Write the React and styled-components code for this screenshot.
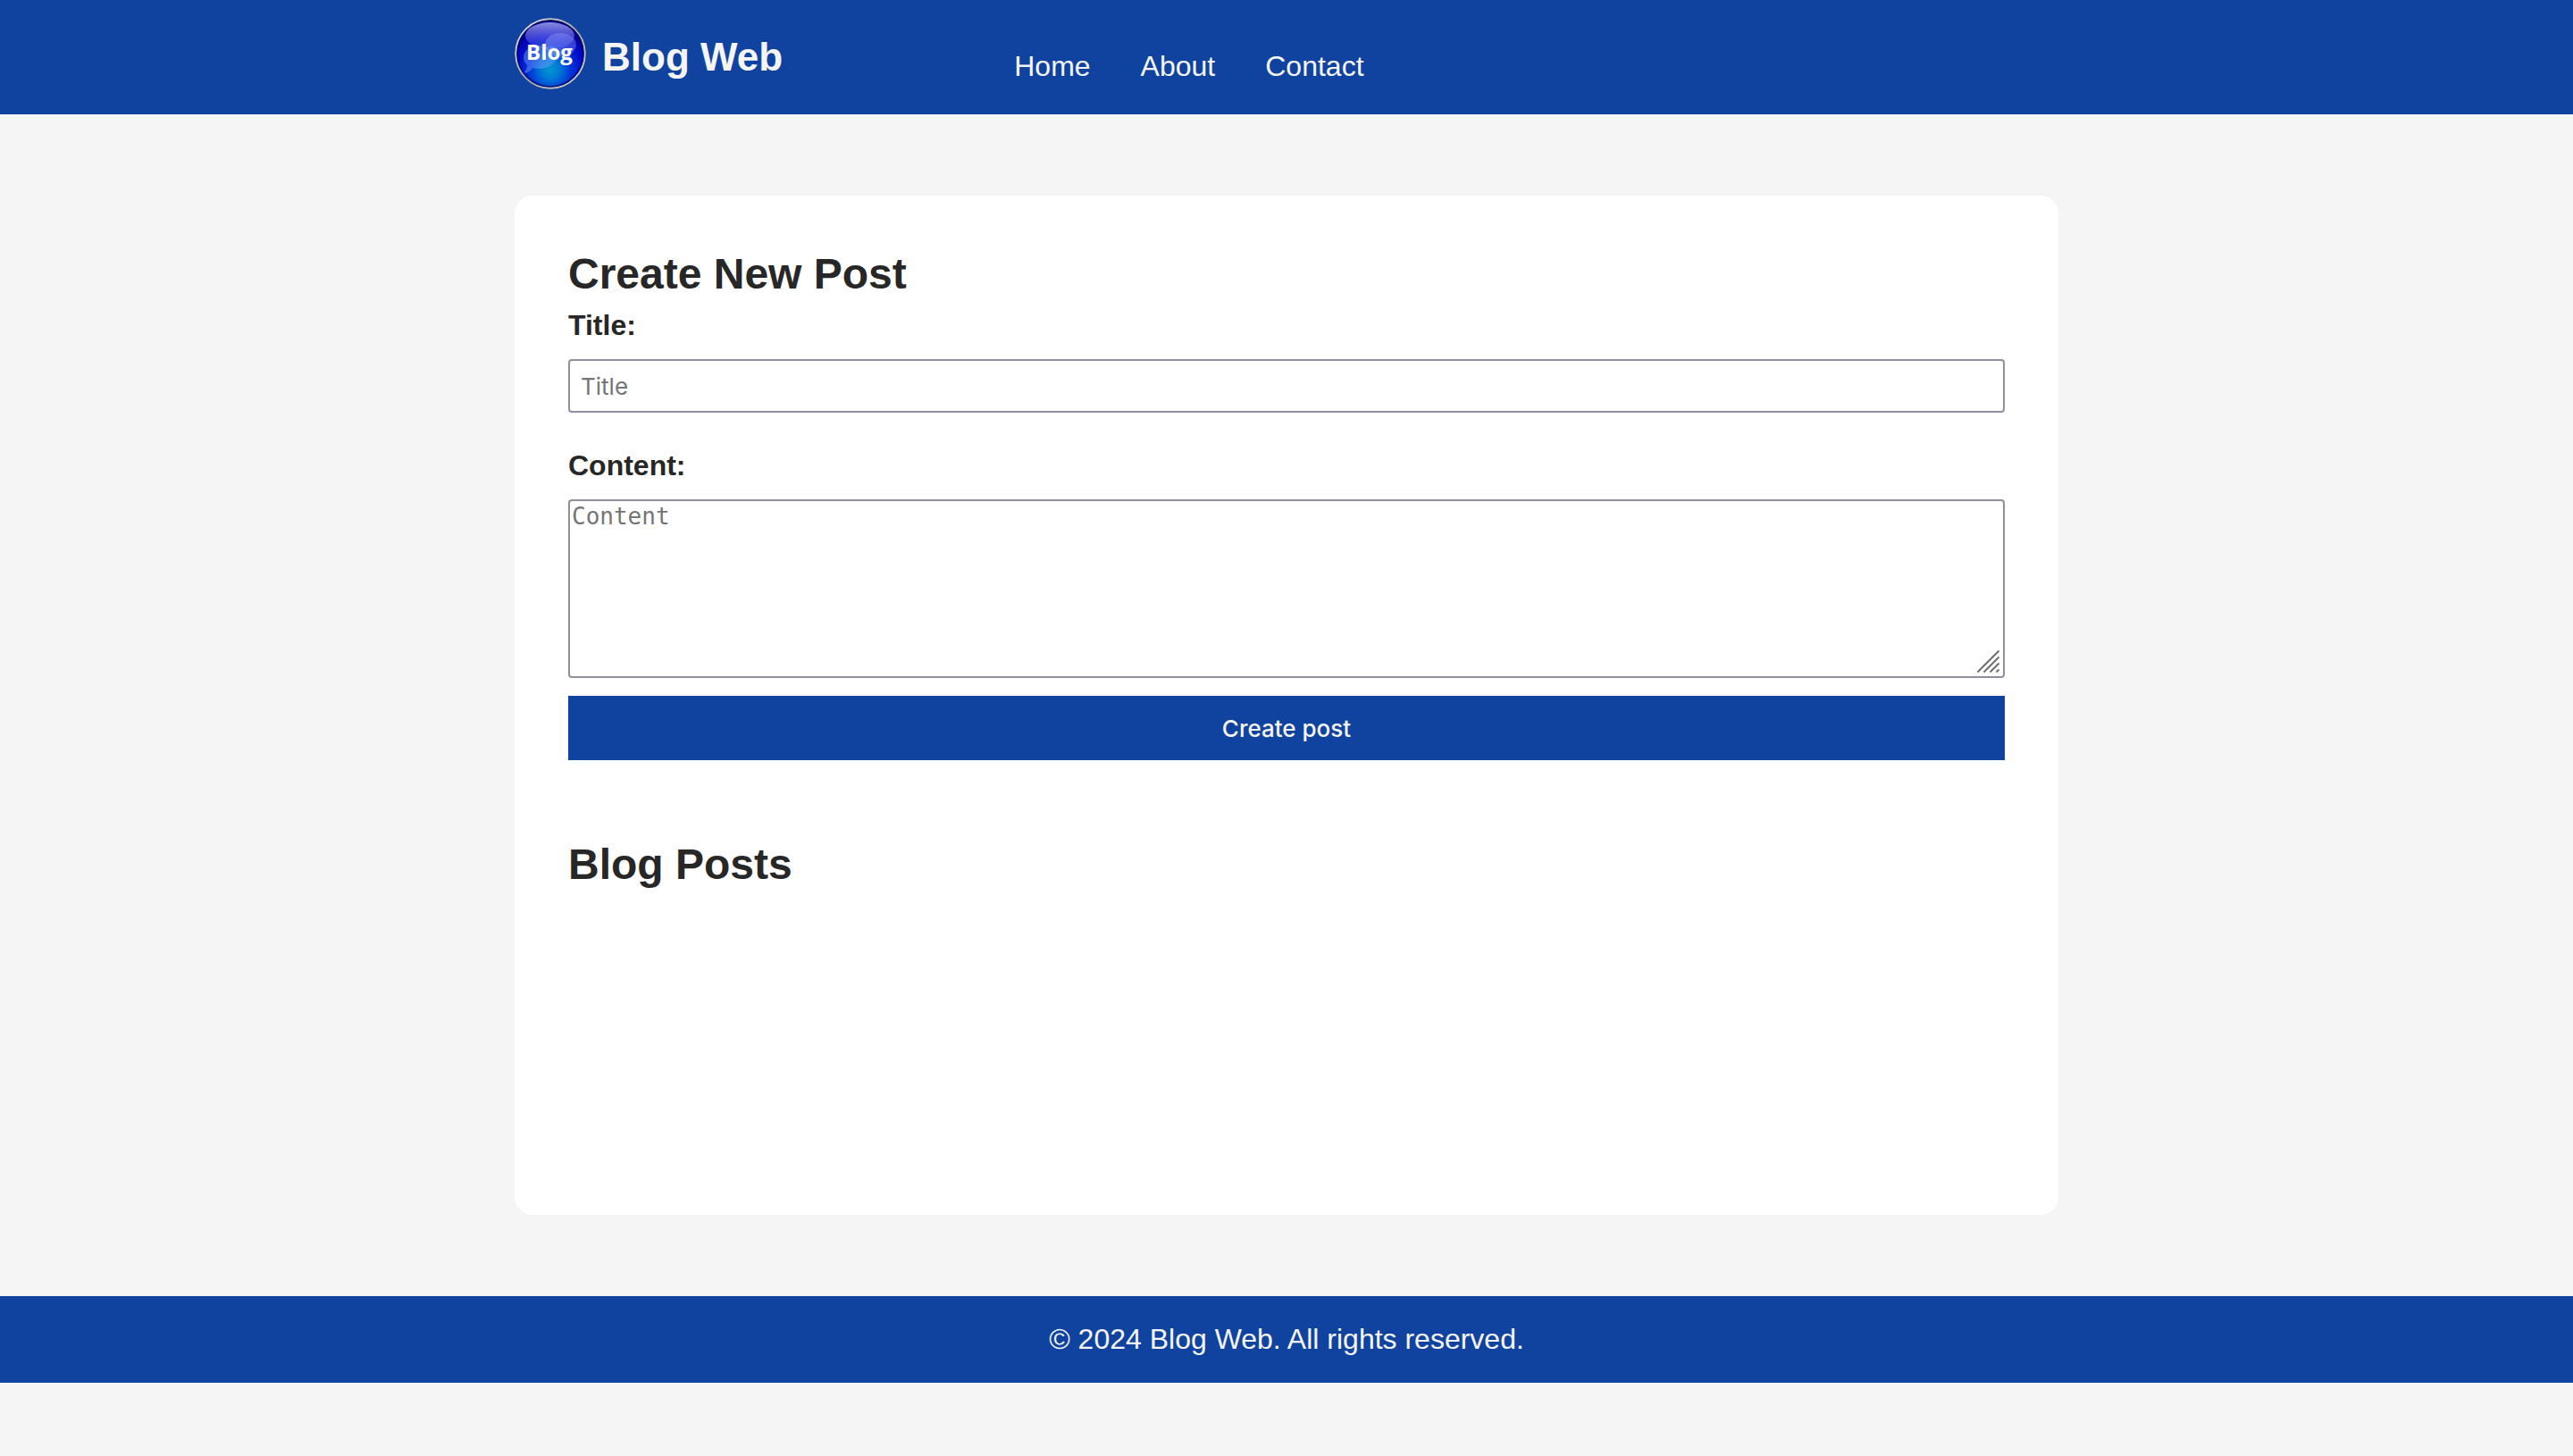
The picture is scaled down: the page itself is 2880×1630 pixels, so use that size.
import React from "react";
import styled, { createGlobalStyle } from "styled-components";

const BLUE = "#10439f";
const LIGHT = "#f5f5f5";
const INK = "#272727";

const GlobalStyle = createGlobalStyle`
  * {
    box-sizing: border-box;
    margin: 0;
    padding: 0;
  }

  body {
    background: ${LIGHT};
    color: ${INK};
    font-family: "Liberation Sans", Arial, sans-serif;
    font-size: 32px;
    line-height: 37px;
  }
`;

const Container = styled.div`
  width: 60%;
  margin: 0 auto;
`;

const Header = styled.header`
  background: ${BLUE};
  color: ${LIGHT};
  padding: 20px 0;
`;

const HeaderRow = styled(Container)`
  display: flex;
  align-items: center;
`;

const Brand = styled.div`
  display: flex;
  align-items: flex-start;
  gap: 18px;
`;

const BrandName = styled.h1`
  font-size: 44px;
  line-height: 88px;
  font-weight: bold;
  white-space: nowrap;
`;

const Nav = styled.nav`
  margin: 20px 0 0 15%;
`;

const NavList = styled.ul`
  display: flex;
  gap: 56px;
  list-style: none;
`;

const NavLink = styled.a`
  color: ${LIGHT};
  text-decoration: none;
`;

const Card = styled.main`
  width: 60%;
  min-height: 70vh;
  margin: 91px auto;
  padding: 60px;
  display: flex;
  flex-direction: column;
  gap: 89px;
  background: #fff;
  border-radius: 20px;
`;

const Heading = styled.h2`
  font-size: 48px;
  line-height: 55px;
  font-weight: bold;
`;

const Form = styled.form`
  display: flex;
  flex-direction: column;
  margin-top: 12px;
`;

const Field = styled.div`
  display: flex;
  flex-direction: column;
  gap: 20px;
  margin-bottom: ${(p) => p.$space}px;
`;

const Label = styled.label`
  line-height: 36px;
  font-weight: bold;
`;

const TextInput = styled.input`
  width: 100%;
  height: 60px;
  padding: 0 12px;
  border: 2px solid #8f8f9d;
  border-radius: 4px;
  background: #fff;
  color: ${INK};
  font: 26px Inter, sans-serif;

  &::placeholder {
    color: #757575;
    opacity: 1;
  }
`;

const AreaWrap = styled.div`
  position: relative;
  display: flex;
`;

const TextArea = styled.textarea`
  width: 100%;
  height: 200px;
  padding: 2px;
  border: 2px solid #8f8f9d;
  border-radius: 4px;
  background: #fff;
  color: ${INK};
  font: 26px "DejaVu Sans Mono", monospace;
  resize: none;

  &::placeholder {
    color: #757575;
    opacity: 1;
  }
`;

const Grip = styled.svg`
  position: absolute;
  right: 6px;
  bottom: 6px;
  pointer-events: none;
`;

const SubmitButton = styled.button`
  height: 72px;
  border: 0;
  background: ${BLUE};
  color: ${LIGHT};
  font: 500 26px Inter, sans-serif;
  cursor: pointer;
`;

const Footer = styled.footer`
  padding: 30px 0;
  background: ${BLUE};
  color: ${LIGHT};
  text-align: center;
`;

function Logo() {
  return (
    <svg width="80" height="80" viewBox="0 0 80 80" role="img" aria-label="Blog">
      <defs>
        <radialGradient id="ball" cx="40" cy="58" r="48" gradientUnits="userSpaceOnUse">
          <stop offset="0" stopColor="#0098cc" />
          <stop offset="0.22" stopColor="#0078d6" />
          <stop offset="0.5" stopColor="#0032d8" />
          <stop offset="0.78" stopColor="#0008c8" />
          <stop offset="1" stopColor="#00008c" />
        </radialGradient>
        <linearGradient id="shine" x1="0" y1="0" x2="0" y2="1">
          <stop offset="0" stopColor="#9a9af0" stopOpacity="0.9" />
          <stop offset="1" stopColor="#5a5aee" stopOpacity="0.25" />
        </linearGradient>
        <linearGradient id="ring" x1="0" y1="0" x2="1" y2="1">
          <stop offset="0" stopColor="#e4e4e4" />
          <stop offset="0.5" stopColor="#a8a8a8" />
          <stop offset="1" stopColor="#d8d4cc" />
        </linearGradient>
      </defs>
      <circle cx="40" cy="40" r="38.7" fill="url(#ball)" stroke="url(#ring)" strokeWidth="2" />
      <circle cx="40" cy="40" r="37" fill="none" stroke="#000050" strokeOpacity="0.7" strokeWidth="1.6" />
      <ellipse cx="39.5" cy="20" rx="27.5" ry="15" fill="url(#shine)" />
      <path
        d="M51 17C61 17 69 22.500 69 30C69 34.500 66 38 62 41C62 45 63 48 66 49C61 49.500 56 47 54 43.500C43 44 34 38 34 30.500C34 23 41 17 51 17Z"
        fill="#a9b6ff"
        fillOpacity="0.32"
      />
      <path
        d="M28 31C38 31 45 36.500 45 43.500C45 51 37 57 27 57L20 56C18 60 14 62 10 61.500C13 59 14 56 14 53C11 50.500 10 47 10 44C10 36.500 18 31 28 31Z"
        fill="#86a8ff"
        fillOpacity="0.4"
      />
      <path d="M28 57C38 56 45 51 45 43.500C45 39 42 35 38 32C45 31 49 34 49 40C49 50 38 57 28 57Z" fill="#6fd0ff" fillOpacity="0.3" />
      <text
        x="39"
        y="47"
        textAnchor="middle"
        fontFamily="'Open Sans', 'Noto Sans', sans-serif"
        fontWeight="700"
        fontSize="24"
        fill="#fff"
      >
        Blog
      </text>
    </svg>
  );
}

const LINKS = ["Home", "About", "Contact"];

export default function App() {
  return (
    <>
      <GlobalStyle />
      <Header>
        <HeaderRow>
          <Brand>
            <Logo />
            <BrandName>Blog Web</BrandName>
          </Brand>
          <Nav>
            <NavList>
              {LINKS.map((name) => (
                <li key={name}>
                  <NavLink href={`#${name.toLowerCase()}`}>{name}</NavLink>
                </li>
              ))}
            </NavList>
          </Nav>
        </HeaderRow>
      </Header>

      <Card>
        <section>
          <Heading>Create New Post</Heading>
          <Form onSubmit={(e) => e.preventDefault()}>
            <Field $space={41}>
              <Label htmlFor="title">Title:</Label>
              <TextInput id="title" type="text" placeholder="Title" />
            </Field>
            <Field $space={20}>
              <Label htmlFor="content">Content:</Label>
              <AreaWrap>
                <TextArea id="content" placeholder="Content" />
                <Grip width="25" height="25" viewBox="0 0 25 25" stroke="#6e6e6e" strokeWidth="2" aria-hidden="true">
                  <path d="M0.500 24.500L24.500 0.500M7.500 24.500L24.500 7.500M14.500 24.500L24.500 14.500M21.500 24.500L24.500 21.500" />
                </Grip>
              </AreaWrap>
            </Field>
            <SubmitButton type="submit">Create post</SubmitButton>
          </Form>
        </section>
        <section>
          <Heading>Blog Posts</Heading>
        </section>
      </Card>

      <Footer>
        <p>© 2024 Blog Web. All rights reserved.</p>
      </Footer>
    </>
  );
}
